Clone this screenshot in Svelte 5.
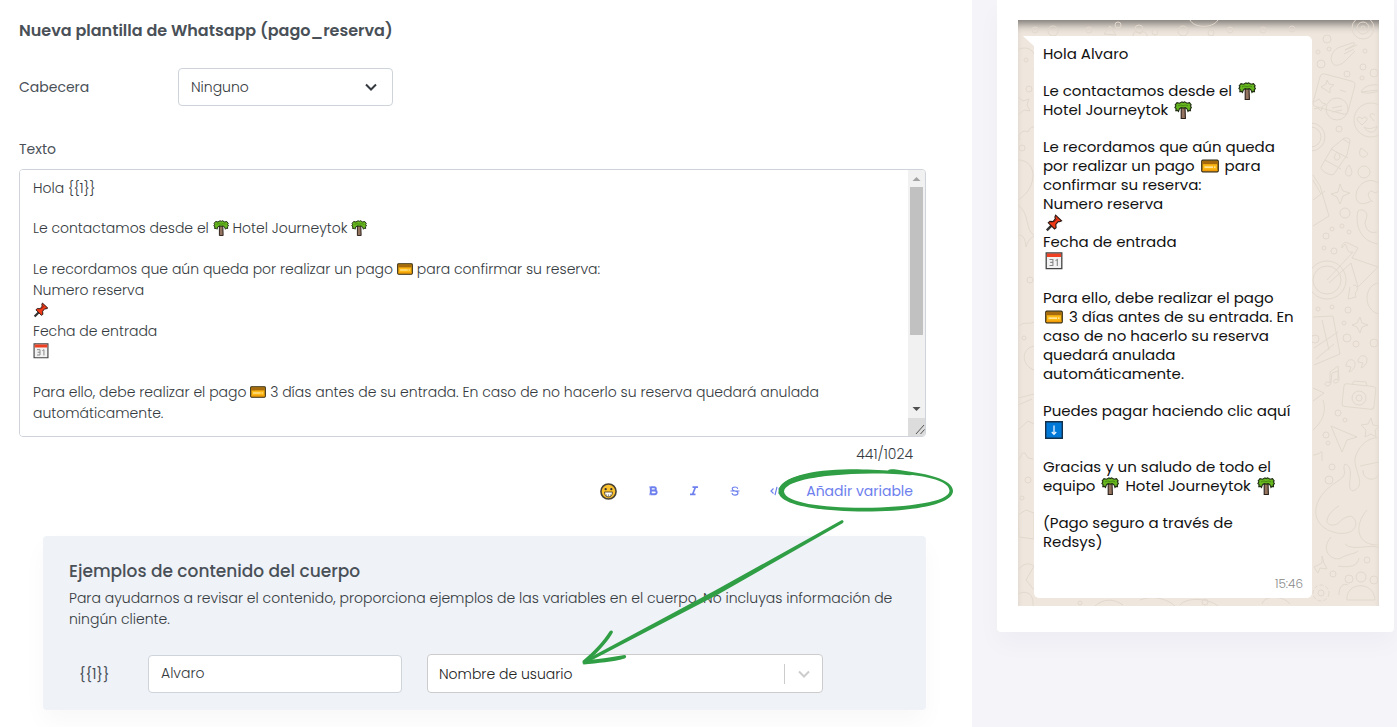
<script>
  let header = $state('none');
  let sample = $state('Alvaro');
  let source = $state('name');

  const body = [
    ['Hola {{1}}'],
    ['Le contactamos desde el 🌴 Hotel Journeytok 🌴'],
    [
      'Le recordamos que aún queda por realizar un pago 💳 para confirmar su reserva:',
      'Numero reserva',
      '📌',
      'Fecha de entrada',
      '📅'
    ],
    ['Para ello, debe realizar el pago 💳 3 días antes de su entrada. En caso de no hacerlo su reserva quedará anulada', 'automáticamente.']
  ];

  const preview = [
    ['Hola Alvaro'],
    ['Le contactamos desde el 🌴', 'Hotel Journeytok 🌴'],
    [
      'Le recordamos que aún queda',
      'por realizar un pago 💳 para',
      'confirmar su reserva:',
      'Numero reserva',
      '📌',
      'Fecha de entrada',
      '📅'
    ],
    [
      'Para ello, debe realizar el pago',
      '💳 3 días antes de su entrada. En',
      'caso de no hacerlo su reserva',
      'quedará anulada',
      'automáticamente.'
    ],
    ['Puedes pagar haciendo clic aquí', '⬇'],
    ['Gracias y un saludo de todo el', 'equipo 🌴 Hotel Journeytok 🌴'],
    ['(Pago seguro a través de', 'Redsys)']
  ];

  let text = $state(body.map((p) => p.join('\n')).join('\n\n'));
  const names = { '🌴': 'palm', '💳': 'card', '📌': 'pin', '📅': 'cal', '⬇': 'down' };
  const split = (line) => line.split(/(🌴|💳|📌|📅|⬇)/u).filter((t) => t !== '');
</script>

{#snippet emoji(name)}
  <svg class="emoji" viewBox="0 0 18 18" aria-hidden="true">
    {#if name === 'palm'}
      <path d="M7.200 5.500h3.800l.4 12H7.200z" fill="#957460" stroke="#2a211b" stroke-width="1.100" />
      <path d="M1.200 3.800 3 1.700l2.600.5L8 .8l1.200.8L10.600.8l2.500 1.400 2.400-.5 1.700 2.200-.8.800 1 2-1.100.900.200 2-1.600-.2-.9 1-1-2.600-1.700-1.100-2.100.4-2.100-.4-1.700 1.100-.9 2.600-1-1-1.700.200.300-2-1.200-.9 1-2z" fill="#67b71f" stroke="#1f2d12" stroke-width="1.100" />
      <path d="M4 5c1.800-1.200 3.500-1 5.100-.2C10.700 4 12.400 3.800 14.200 5" fill="none" stroke="#3f7d10" stroke-width=".8" />
    {:else if name === 'card'}
      <rect x=".8" y="3.200" width="16.400" height="11.600" rx="1" fill="#fdb813" stroke="#30260f" stroke-width="1.300" />
      <path d="M1.500 4h15v3.200h-15z" fill="#a66a0c" />
      <path d="M1.500 12.600h15v1.500h-15z" fill="#f09c0a" />
      <path d="M3.500 10.200h8.500M13 10.200h1.500" stroke="#fff3c4" stroke-width="1.200" />
    {:else if name === 'pin'}
      <path d="m7.400 10.600-5.600 5.800" stroke="#333" stroke-width="2.400" />
      <path d="m10.600 1.200 6 5.600-2 1-1.400-.2-2.400 2.800.3 3.400-1.600 1.200-6.200-6.200L4.900 7.400l3.200.2L10.400 4.600l-.5-1.600z" fill="#f03a17" stroke="#2b1713" stroke-width="1.100" />
      <path d="m9 8 3.500-3.500" stroke="#a82310" stroke-width="1" />
    {:else if name === 'cal'}
      <path d="M1.200 1h15.600v15.600H1.200z" fill="#f2f2f2" stroke="#444" stroke-width="1.300" />
      <path d="M1.900 1.600h14.200v3.400H1.900z" fill="#ef4023" />
      <path d="M4.500 7.500h3.400v6H4.500M5.200 10.400h2.700M10.500 8.600l1.800-1.100v6.500" fill="none" stroke="#888" stroke-width="1.100" />
    {:else if name === 'down'}
      <path d="M.7.700h16.600v16.600H.7z" fill="#0078d7" stroke="#14304a" stroke-width="1.400" />
      <path d="M9 4.500v8.500M6.800 11 9 13.400 11.200 11" fill="none" stroke="#e6f3ff" stroke-width="1.300" />
    {/if}
  </svg>
{/snippet}

{#snippet lines(paragraphs)}
  {#each paragraphs as paragraph}
    <p>
      {#each paragraph as line}
        <span class="line">{#each split(line) as token}{#if names[token]}{@render emoji(names[token])}{:else}{token}{/if}{/each}</span>
      {/each}
    </p>
  {/each}
{/snippet}

<main class="page">
  <section class="form">
    <h1>Nueva plantilla de Whatsapp (pago_reserva)</h1>

    <div class="field">
      <label for="header">Cabecera</label>
      <div class="picker">
        <select id="header" bind:value={header}>
          <option value="none">Ninguno</option>
        </select>
        <svg class="chevron" viewBox="0 0 16 16" aria-hidden="true"><path d="m3 5.500 5 5 5-5" /></svg>
      </div>
    </div>

    <label class="caption" for="text">Texto</label>
    <div class="editor">
      <textarea id="text" bind:value={text} spellcheck="false"></textarea>
      <div class="mirror" aria-hidden="true">{@render lines(body)}</div>
      <div class="scroll" aria-hidden="true">
        <svg viewBox="0 0 17 17"><path d="M4.500 11h8l-4-4z" fill="#a3a3a3" /></svg>
        <div class="track"><div class="thumb"></div></div>
        <svg viewBox="0 0 17 17"><path d="M4.500 6h8l-4 4z" fill="#505050" /></svg>
        <svg class="grip" viewBox="0 0 17 18"><path d="m8 16 8-9M12.500 16l4-4.500" stroke="#555" fill="none" /></svg>
      </div>
    </div>
    <div class="counter">441/1024</div>

    <div class="tools">
      <button class="tool face" aria-label="Emoji">
        <svg viewBox="0 0 18 18" width="17" height="17">
          <circle cx="9" cy="9" r="8" fill="#fbc22d" stroke="#4a4334" stroke-width="1.700" />
          <path d="M4.800 9.500h8.400c0 3.500-1.700 5.300-4.200 5.300s-4.200-1.800-4.200-5.300z" />
          <path d="M7 12v2.300M9 12v2.600M11 12v2.300" stroke-width=".6" />
          <circle cx="6" cy="6.500" r="1.200" fill="#333" /><circle cx="12" cy="6.500" r="1.200" fill="#333" />
        </svg>
      </button>
      <button class="tool" aria-label="Negrita">
        <svg viewBox="0 0 10 10" width="10" height="10"><path d="M1.500 1.200h1M1.500 8.200h1M2.800 1.200v7M2.800 1.200h3.400a1.600 1.600 0 0 1 0 3.300H2.800M6 4.500h.8a1.800 1.800 0 0 1 0 3.700h-4" stroke-width="1.900" /></svg>
      </button>
      <button class="tool" aria-label="Cursiva">
        <svg viewBox="0 0 10 10" width="10" height="10"><path d="M3.500 1.200h5.500M1 8.300h5.500M6.400 1.200 3.600 8.300" stroke-width="1.700" /></svg>
      </button>
      <button class="tool" aria-label="Tachado">
        <svg viewBox="0 0 10 10" width="10" height="10"><path d="M.5 5h9M7.800 2.900C7.500 1.500 6.400 1 5 1 3.300 1 2.200 1.700 2.200 2.900c0 1.300 1.300 1.700 2.800 2.100 1.700.4 3 .8 3 2.100S6.700 9.100 5 9.100 2.200 8.400 2 7" stroke-width="1.100" /></svg>
      </button>
      <button class="tool" aria-label="Código">
        <svg viewBox="0 0 12 10" width="12" height="10"><path d="M3.500 2.500 1 5l2.500 2.500M8.500 2.500 11 5 8.500 7.500M7 .8 5 9.200" stroke-width="1.200" /></svg>
      </button>
      <button class="add">Añadir variable</button>
    </div>

    <div class="examples">
      <h2>Ejemplos de contenido del cuerpo</h2>
      <p class="hint">Para ayudarnos a revisar el contenido, proporciona ejemplos de las variables en el cuerpo. No incluyas información de ningún cliente.</p>
      <div class="variable">
        <label for="sample">{'{{1}}'}</label>
        <input id="sample" type="text" bind:value={sample} />
        <div class="picker wide">
          <select aria-label="Nombre de usuario" bind:value={source}>
            <option value="name">Nombre de usuario</option>
          </select>
          <svg class="chevron" viewBox="0 0 20 20" aria-hidden="true"><path d="m5 7.500 5 5 5-5" /></svg>
        </div>
      </div>
    </div>

    <svg class="marks" viewBox="0 0 972 727" aria-hidden="true">
      <path fill-rule="evenodd" d="M778.500 491C780 477 812 469.500 850 469.200c9 0 25 .4 38 1.200 2-1.500 5-1.300 8-.8l16 2.400c25 3.500 41 10 41 19 0 14-42 20.500-88 20.500-46-.3-87-6-86.500-20.500zM784 491.500c1 11.500 40 16.500 80 16.300 44-.2 85-6 85.500-16.800.2-9-18-13.500-37-16l-3 .3c-12-1.500-36-2.500-58-1.300-36 2-66 7-67.500 17.500z" />
      <path d="M781 489c4-8 20-13 42-15" fill="none" stroke="#2f9e44" stroke-width="4" />
      <path d="M841.500 520.300c2-.6 3 1.700 1 2.900L718 594.500 583.500 664.500l-1-3L715 590.500z" />
      <path d="m609.500 631.500c1.500-2 4.200-.8 3.200 1.300-3 6-14 19-25 28.500l-5 2.500v-3c11-9 21-20 26.800-29.300zM624.500 655c2.200 0 2.200 3 0 3.600-11 3.500-27 4.500-41 5.900l2-4.500c14-.8 27-3 39-5z" />
    </svg>
  </section>

  <aside class="card">
    <div class="chat">
      <svg class="doodles" viewBox="1018 20 361 586" preserveAspectRatio="xMaxYMin slice" aria-hidden="true">
        <g class="dots">
          <circle cx="1035" cy="30" r="3" /><circle cx="1053" cy="31" r="5" /><circle cx="1089" cy="30" r="3" /><circle cx="1118" cy="25" r="3" /><circle cx="1139" cy="29" r="4" /><circle cx="1155" cy="32" r="3" /><circle cx="1183" cy="31" r="5" /><circle cx="1211" cy="33" r="3" /><circle cx="1230" cy="30" r="3" /><circle cx="1263" cy="30" r="3" /><circle cx="1292" cy="29" r="3" />
          <circle cx="1327" cy="39" r="4" /><circle cx="1318" cy="52" r="2" /><circle cx="1329" cy="49" r="2" /><circle cx="1321" cy="64" r="4" /><circle cx="1365" cy="51" r="2" /><circle cx="1363" cy="67" r="3" /><circle cx="1374" cy="73" r="4" /><circle cx="1347" cy="74" r="3" /><circle cx="1362" cy="78" r="2" /><circle cx="1339" cy="129" r="3" /><circle cx="1364" cy="172" r="6" /><circle cx="1345" cy="213" r="5" /><circle cx="1332" cy="229" r="2" /><circle cx="1342" cy="226" r="2" /><circle cx="1326" cy="236" r="3" /><circle cx="1349" cy="232" r="2" /><circle cx="1324" cy="248" r="2" /><circle cx="1334" cy="251" r="3" /><circle cx="1318" cy="309" r="2" /><circle cx="1332" cy="307" r="2" /><circle cx="1348" cy="310" r="3" /><circle cx="1344" cy="323" r="2" /><circle cx="1347" cy="338" r="4" /><circle cx="1356" cy="344" r="3" /><circle cx="1374" cy="343" r="4" /><circle cx="1338" cy="413" r="3" /><circle cx="1345" cy="420" r="2" /><circle cx="1326" cy="435" r="3" /><circle cx="1328" cy="443" r="2" /><circle cx="1332" cy="467" r="3" /><circle cx="1329" cy="480" r="4" /><circle cx="1367" cy="560" r="3" /><circle cx="1333" cy="574" r="3" />
          <circle cx="1026" cy="60" r="2" /><circle cx="1029" cy="89" r="3" /><circle cx="1022" cy="148" r="3" /><circle cx="1030" cy="280" r="3" /><circle cx="1024" cy="338" r="2" /><circle cx="1022" cy="498" r="2" /><circle cx="1028" cy="480" r="3" /><circle cx="1205" cy="602" r="3" /><circle cx="1080" cy="603" r="2" />
        </g>
        <path d="M1332 62c-3-5 2-13 8-15l12-4c4-1 3 2 0 3l-7 4M1345 50l12-5M1344 54l10-5M1332 62c2 6 10 3 14-2l9-9" />
        <rect x="1316" y="77" width="36" height="34" rx="4" transform="rotate(15 1334 94)" /><circle cx="1337" cy="109" r="11" /><path d="m1332 108 10-2M1332 112l10-2M1321 87l5-3 1-4 2 4 5 1-4 3v5l-4-3zM1340 90l6 2M1314 102l5-3 3 4 4 1-4 3-1 4-3-3-4 1" />
        <circle cx="1371" cy="120" r="17" /><path d="m1362 125-5-5c0-4 4-3 5-1 2-3 6-2 5 1zM1374 121l-4-5c0-4 4-2 5-1M1364 127c5 3 10 1 13-1-1 8-9 8-13 1zM1378 85c-8-1-15 2-17 7 6 2 12 1 17-1M1361 92l17-2" />
        <circle cx="1311" cy="137" r="14" /><circle cx="1311" cy="137" r="10" />
        <path d="m1343 139c2-2 7-1 7 2l-3 14-13 19c-2 3-14-3-13-7l11-19zM1331 149l17 9M1325 160l16 9M1343 139l6 4M1337 152c-4 5-3 8 0 8 4-1 4-4 0-8zM1361 148c-3 6-1 9 3 9 4-1 5-4 1-6zM1349 165c-5 6-4 10-1 11 5 0 5-5 1-11z" />
        <path d="m1340 184 3 7 7 2-7 3-3 8-3-7-6-3 7-2zM1371 201c-8 5-15 3-15-5 0-11 12-19 20-14l3 1M1373 202c-6-4-6-11-1-11l3 2 4-2M1313 175l7 11 9 30-16 10M1313 200l12-9M1313 180l8 14" />
        <path d="M1358 211c4-3 9 0 9 5l-2 7c1 7 5 11 12 9M1358 211c-3 12 1 30 20 33" />
        <circle cx="1327" cy="280" r="19" /><circle cx="1327" cy="280" r="14" /><path d="m1327 280 26-28c-7 2-5-6-8-8l-3 4c-1-3 2-7 6-5l10 5-6 10 26 9-20 20-7-24-22 20M1353 285c5 0 6 5 2 8l1 4-8 2 2-12" /><path d="M1379 283c-15 1-17 27 0 31" />
        <path d="m1313 317 20-1 7 38-26 11M1322 320l7 30M1314 348l24-16M1316 359l18-15" /><circle cx="1315" cy="339" r="4" />
        <path d="m1360 317 2 6 6 2-6 2-2 6-3-6-5-2 5-2zM1346 366c0-8 9-8 9-2 0 4-3 7-6 8l2-5zM1358 362c0-8 9-8 9-2 0 4-3 7-6 8l2-5zM1330 372v11c-4-3-7 2-3 3 3 0 4-2 4-4l1-9 6-2v9c-4-2-6 2-3 3 3 0 4-2 4-4l-1-13z" />
        <rect x="1343" y="385" width="32" height="23" rx="3" transform="rotate(6 1359 396)" /><circle cx="1359" cy="398" r="7" /><circle cx="1359" cy="398" r="3" /><path d="m1352 385 2-4 12 1 1 4" />
        <path d="m1331 426 26 11-10 3-5 12zM1371 418l2 7 7 1-5 4 1 7-5-3-6 3 1-7-5-5 7-1zM1313 388l11 5-11 8M1313 430c9-8 14-18 10-30M1313 455c6 0 8-4 9-3v9" />
        <path d="M1379 438c-13-2-25 14-24 24 1 11 11 24-2 29-9-2 4-23-8-27-4 6 5 9-7 17-29 17-30 46-1 52 20 3 23-12 14-17-13 2-10 10-20 9-10-2 1-16 8-19M1360 466l19-4M1363 470c0 12 14 11 16 4M1367 510c-14 16-10 36 12 35M1331 537c-12 14 2 25 10 21 6-4 14-4 17-7M1345 544c8 8 26-1 34 4M1338 566c12 2 20 0 21-8" />
        <circle cx="1321" cy="593" r="8" stroke-dasharray="4 2" /><circle cx="1321" cy="593" r="3" />
        <circle cx="1361" cy="577" r="5" /><circle cx="1349" cy="579" r="4" /><circle cx="1374" cy="580" r="4" /><path d="M1347 600c-2-18 27-20 28 0zM1339 595c0-9 4-12 9-10M1314 567l8-4v-7l2 7 3 6-7-1-2 5z" />
        <circle cx="1363" cy="28" r="11" /><circle cx="1363" cy="28" r="6" /><circle cx="1363" cy="28" r="2" />
        <path d="m1104 34 6-8 6 9zM1133 36c0-6 6-5 7-2 2-4 7-2 7 2M1190 20c4 8 22 9 28 0M1018 50c10-6 22 2 16 20M1018 97l5 4 6-2-2 6 3 6-6-1-6 5M1020 140c-4-6 4-11 8-8 4-8 7-5 7-1M1018 160c20 0 20 28 0 40M1018 235c6 0 7 4 8 12 2-7 4-8 8-11M1018 205c12 8 7 26 16 30M1019 326c5-5 9-1 15-4M1034 346c-14 3-12 20 0 24M1018 398l16-4M1018 405l14-6M1018 430l10-9 6 3M1018 460c5-4 2-8 7-7l3 5 5 1M1018 515l8-5 8 3v26l-15-2zM1018 570c8-10 14-5 16-4l-8 14 8 10M1018 594c8-4 16-1 15 12M1095 606c8-7 18-8 28-1M1140 600c15-6 30 1 35 6M1180 605c8-9 30-6 38 1M1262 604c3-10 22-8 28 0" />
      </svg>
      <div class="bubble">
        {@render lines(preview)}
        <time>15:46</time>
      </div>
    </div>
  </aside>
</main>

<style>
  :global(body) {
    margin: 0;
    background: #f4f4f9;
  }
  * {
    box-sizing: border-box;
  }
  .page {
    display: grid;
    grid-template-columns: minmax(0, 71fr) minmax(0, 29fr);
    column-gap: 25px;
    align-items: start;
    min-height: 100vh;
    padding-right: 3px;
    overflow: hidden;
    font-family: Poppins, Inter, sans-serif;
    font-size: 14px;
    font-weight: 300;
    color: #343a40;
  }
  .form {
    position: relative;
    min-height: 100vh;
    padding: 19px 46px 17px 19px;
    background: #fff;
  }
  h1, h2, p {
    margin: 0;
  }
  h1 {
    font-size: 16px;
    font-weight: 600;
    line-height: 24px;
    color: #495057;
  }
  .field {
    display: grid;
    grid-template-columns: 159px 215px;
    align-items: center;
    margin-top: 25px;
  }
  label {
    font-weight: 400;
    line-height: 20px;
    color: #495057;
  }
  .caption {
    display: block;
    margin: 33px 0 10px;
  }
  .picker {
    display: grid;
    align-items: center;
  }
  .picker > * {
    grid-area: 1 / 1;
  }
  select, input {
    width: 100%;
    height: 38px;
    padding: 0 12px;
    border: 1px solid #ced4da;
    border-radius: 4px;
    background: #fff;
    color: inherit;
    font: inherit;
    appearance: none;
  }
  .chevron {
    width: 16px;
    height: 16px;
    justify-self: end;
    margin-right: 14px;
    fill: none;
    stroke: #343a40;
    stroke-width: 2;
    pointer-events: none;
  }
  .editor {
    display: grid;
    grid-template-columns: minmax(0, 1fr) 17px;
    height: 268px;
    border: 1px solid #ced4da;
    border-radius: 4px;
    overflow: hidden;
  }
  textarea, .mirror {
    grid-area: 1 / 1;
    min-height: 0;
    padding: 8px 13px;
    line-height: 20px;
    overflow: hidden;
  }
  textarea {
    border: 0;
    outline: 0;
    resize: none;
    background: #fff;
    color: transparent;
    caret-color: #495057;
    font: inherit;
  }
  .mirror {
    pointer-events: none;
  }
  .mirror p + p {
    margin-top: 20px;
  }
  .line {
    display: block;
    height: 20px;
    white-space: nowrap;
  }
  .emoji {
    display: inline-block;
    width: 16px;
    height: 16px;
    vertical-align: -3px;
  }
  .mirror .line:has(.emoji) {
    height: 21px;
    line-height: 21px;
  }
  .scroll {
    display: flex;
    flex-direction: column;
    background: #f1f1f1;
  }
  .scroll > svg {
    display: block;
    flex: none;
    width: 17px;
    height: 17px;
  }
  .scroll .grip {
    height: 18px;
    background: #dcdcdc;
  }
  .track {
    flex: 1;
    padding: 0 2px;
  }
  .thumb {
    height: 69%;
    background: #c1c1c1;
  }
  .counter {
    margin-top: 7px;
    padding-right: 13px;
    text-align: right;
    line-height: 20px;
  }
  .tools {
    display: flex;
    justify-content: flex-end;
    align-items: center;
    height: 32px;
    margin-top: 11px;
    padding-right: 13px;
  }
  button {
    padding: 0;
    border: 0;
    background: none;
    color: #6d80ee;
    font: inherit;
    cursor: pointer;
  }
  .tool {
    display: grid;
    place-items: center;
    width: 41px;
    height: 32px;
  }
  .face {
    width: 47px;
  }
  .tool path {
    fill: none;
    stroke: currentColor;
  }
  .face path {
    fill: #fff;
    stroke: #5a4a28;
  }
  .add {
    margin-left: 10px;
    font-weight: 400;
    line-height: 20px;
  }
  .examples {
    margin: 29px 0 0 24px;
    padding: 24px 26px 17px;
    border-radius: 4px;
    background: #eff2f7;
    box-shadow: 0 12px 24px rgba(18, 38, 63, 0.03);
  }
  h2 {
    font-size: 17px;
    font-weight: 500;
    line-height: 22px;
    color: #495057;
  }
  .hint {
    margin-top: 6px;
    line-height: 21px;
  }
  .variable {
    display: grid;
    grid-template-columns: 54px 254px minmax(0, 396px);
    column-gap: 25px;
    align-items: center;
    margin-top: 24px;
  }
  .variable label {
    padding-left: 10px;
  }
  .wide select {
    height: 39px;
    padding: 0 11px;
    border-color: #ccc;
    color: #222;
  }
  .wide .chevron {
    width: 39px;
    height: 20px;
    margin: 0;
    border-left: 1px solid #ccc;
    stroke: #ccc;
  }
  .marks {
    position: absolute;
    top: 0;
    left: 0;
    width: 972px;
    height: 727px;
    fill: #2f9e44;
    pointer-events: none;
  }
  .card {
    padding: 20px 15px 26px 21px;
    border-radius: 0 0 4px 4px;
    background: #fff;
    box-shadow: 0 12px 24px rgba(18, 38, 63, 0.03);
  }
  .chat {
    position: relative;
    padding: 16px 67px 8px 16px;
    background: #efe7de;
    box-shadow: inset 0 10px 10px -6px rgba(0, 0, 0, 0.5);
  }
  .doodles {
    position: absolute;
    top: 0;
    left: 0;
    width: 100%;
    height: 100%;
    fill: none;
    stroke: #e2d8cd;
    stroke-width: 1;
  }
  .bubble {
    position: relative;
    padding: 8px 9px 5px;
    border-radius: 0 5px 5px 5px;
    background: #fff;
    color: #111;
    font-size: 15px;
    font-weight: 400;
    line-height: 19px;
  }
  .bubble::before {
    content: '';
    position: absolute;
    top: 0;
    left: -11px;
    width: 12px;
    height: 11px;
    background: #fff;
    clip-path: polygon(0 0, 100% 0, 100% 100%);
  }
  .bubble p + p {
    margin-top: 18px;
  }
  .bubble .line {
    height: 19px;
  }
  .bubble .emoji {
    width: 18px;
    height: 18px;
    margin: 0 2px;
    vertical-align: -4px;
  }
  time {
    display: block;
    margin-top: 24px;
    text-align: right;
    color: #888;
    font-size: 12px;
    font-weight: 300;
    line-height: 18px;
  }
</style>
